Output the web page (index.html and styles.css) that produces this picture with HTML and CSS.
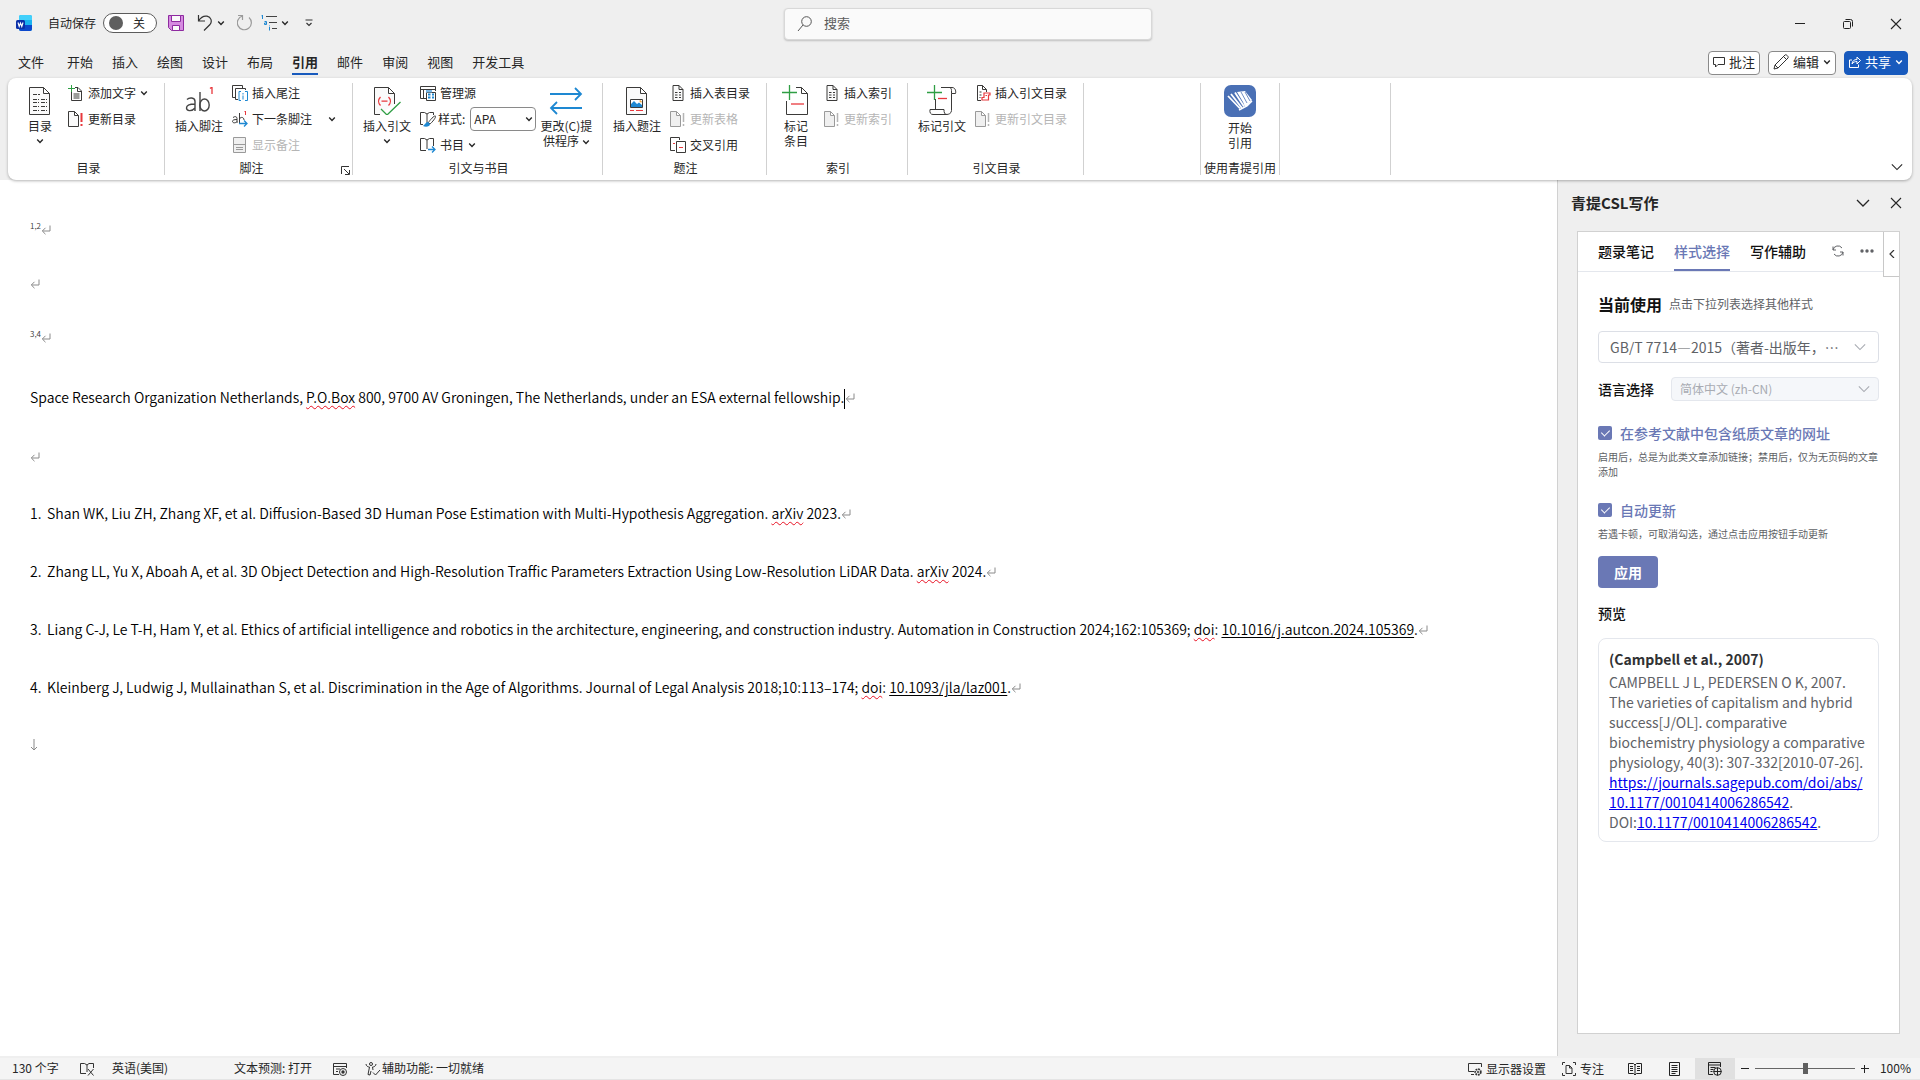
FILE: index.html
```html
<!DOCTYPE html>
<html lang="zh-CN">
<head>
  <meta charset="UTF-8" />
  <meta name="viewport" content="width=device-width, initial-scale=1.0"/>
  <title>Word</title>
  <link rel="stylesheet" href="styles.css">
</head>
<body>

  <!-- shared icons -->
  <svg class="defs" aria-hidden="true">
    <symbol id="chev" viewBox="0 0 8 8"><path d="M1.2 2.6 4 5.4 6.8 2.6" fill="none" stroke="currentColor" stroke-width="1.4"/></symbol>
    <symbol id="chev-wide" viewBox="0 0 14 14"><path d="M1 4l6 6 6-6" fill="none" stroke="currentColor" stroke-width="1.3"/></symbol>
    <symbol id="close" viewBox="0 0 12 12"><path d="M1 1l10 10M11 1 1 11" fill="none" stroke="currentColor" stroke-width="1.1"/></symbol>
    <symbol id="page-small" viewBox="0 0 16 16"><path d="M3 .5h6l4 4v11H3zM9 .5v4h4" fill="#fafafa" stroke="#3b3a39"/><path d="M5 7.5h2.500M9 7.500h2M5 10h2.500M9 10h2M5 12.500h2.500M9 12.500h2" stroke="#3b3a39"/></symbol>
    <symbol id="page-update" viewBox="0 0 16 16"><path d="M.5.500h6l4 4v11H.500zM6.500.500v4h4" fill="#fafafa" stroke="#3b3a39"/><path d="M13.500 2v9M13.500 13v2" stroke="#e8383d" stroke-width="2"/></symbol>
    <symbol id="page-update-off" viewBox="0 0 16 16"><path d="M.5.500h6l4 4v11H.500zM6.500.500v4h4" fill="#f0f0f0" stroke="#9a9a9a"/><path d="M13.500 2v9M13.500 13v2" stroke="#b5b5b5" stroke-width="1.500"/></symbol>
    <symbol id="para" viewBox="0 0 10 10"><path d="M9 .5V6H1.500M4.500 2.800 1.300 6l3.200 3.200" fill="none" stroke="#8a8a8a"/></symbol>
  </svg>

  <header class="titlebar">
    <div class="quick">
      <svg class="word" width="16" height="16" viewBox="0 0 16 16"><rect x="3" width="13" height="16" rx="2" fill="#1ab2f0"/><path d="M5 0h9a2 2 0 0 1 2 2v3H3V2a2 2 0 0 1 2-2z" fill="#42d0fb"/><path d="M3 10h13v4a2 2 0 0 1-2 2H5a2 2 0 0 1-2-2z" fill="#0b47cc"/><rect y="5" width="9" height="9" rx="1.500" fill="#0a2fa8"/><path d="M2 7.500l1.200 4L4.500 8l1.300 3.500 1.200-4" fill="none" stroke="#fff" stroke-width="1.100"/></svg>
      <span id="autosave">自动保存</span>
      <button class="toggle" aria-labelledby="autosave"><i></i>关</button>
      <button class="ico save" title="保存"><svg width="16" height="16" viewBox="0 0 16 16"><path d="M.5.500h15v15h-12l-3-3z" fill="#d58be0" stroke="#8e2aa0"/><path d="M3.500.500h9v6h-9z" fill="#fafafa" stroke="#8e2aa0"/><path d="M4.500 10.500h7v5h-7z" fill="#fafafa" stroke="#8e2aa0"/></svg></button>
      <button class="ico undo" title="撤消"><svg width="16" height="16" viewBox="0 0 16 16"><path d="M1.500 0v6H8M1.500 6C4 2 7 .7 10 1.200c4 .8 5.500 5 3 8.300L7 15.500" fill="none" stroke="#333" stroke-width="1.200"/></svg></button>
      <button class="ico drop" title="撤消列表"><svg width="8" height="8"><use href="#chev"/></svg></button>
      <button class="ico redo" title="重复"><svg width="16" height="16" viewBox="0 0 16 16"><path d="M1 .500h4.500V5M5.500 1A7 7 0 1 0 12 2.500" fill="none" stroke="#9a9a9a" stroke-width="1.200"/></svg></button>
      <button class="ico list" title="多级列表"><svg width="16" height="16" viewBox="0 0 16 16"><path d="M5 1.500h11M8 7.500h8M11 13.500h5" stroke="#444"/><path d="M.5.800 1.500 0v4M3.500 6.500h2v3h-2v-1.500h2M8.500 12v3.500M8.500 10.500v.8" fill="none" stroke="#1e88d2"/></svg></button>
      <button class="ico drop" title="列表选项"><svg width="8" height="8"><use href="#chev"/></svg></button>
      <button class="ico more" title="自定义快速访问工具栏"><svg width="8" height="8" viewBox="0 0 8 8"><path d="M.5 1h7M1.500 4 4 6.500 6.500 4" fill="none" stroke="#333" stroke-width="1.200"/></svg></button>
    </div>
    <label class="search">
      <svg width="16" height="16" viewBox="0 0 16 16"><circle cx="9.500" cy="5.500" r="4.800" fill="none" stroke="#555"/><path d="M6 9 1 15" stroke="#555"/></svg>
      <input type="text" placeholder="搜索">
    </label>
    <div class="window">
      <button title="最小化"><svg width="12" height="12" viewBox="0 0 12 12"><path d="M1 5.500h10" stroke="#222"/></svg></button>
      <button title="还原"><svg width="12" height="12" viewBox="0 0 12 12"><rect x="1.500" y="3.500" width="7" height="7" rx="1" fill="none" stroke="#222"/><path d="M3.500 1.500h5a2 2 0 0 1 2 2v5" fill="none" stroke="#222"/></svg></button>
      <button title="关闭"><svg width="12" height="12"><use href="#close"/></svg></button>
    </div>
  </header>

  <nav class="tabs">
    <button class="file">文件</button>
    <button>开始</button>
    <button>插入</button>
    <button>绘图</button>
    <button>设计</button>
    <button>布局</button>
    <button class="active">引用</button>
    <button>邮件</button>
    <button>审阅</button>
    <button>视图</button>
    <button>开发工具</button>
    <div class="actions">
      <button><svg width="12" height="12" viewBox="0 0 12 12"><path d="M.5 1.500h11v7H5L2.500 11V8.500h-2z" fill="none" stroke="#333"/></svg>批注</button>
      <button><svg width="16" height="16" viewBox="0 0 16 16"><path d="M1 15l1-4L12 1c1-1 4 1.500 3 3L5 14zM10.500 2.500l3 3M2 11l3 3" fill="none" stroke="#333"/></svg>编辑<svg class="arrow" width="8" height="8"><use href="#chev"/></svg></button>
      <button class="share"><svg width="12" height="12" viewBox="0 0 12 12"><path d="M3 4H.500v7.500h9V8.500M3 8c.3-3 2-4.500 5-4.500V1L11.500 4.500 8 8V5.500C6 5.500 4.500 6 3 8z" fill="none" stroke="#fff"/></svg>共享<svg class="arrow" width="8" height="8"><use href="#chev"/></svg></button>
    </div>
  </nav>

  <section class="ribbon">
    <div class="group g-toc">
      <div class="tools">
        <button class="big short">
          <svg width="24" height="28" viewBox="0 0 24 28"><path d="M1.500.500h14l6 6v21h-20zM15.500.500v6h6" fill="#fafafa" stroke="#3b3a39"/><path d="M5 7.500h7M5 12.500h6M13 12.500h6M5 15.500h6M13 15.500h6M5 19.500h6M13 19.500h6M5 23.500h6M13 23.500h6" stroke="#3b3a39" stroke-dasharray="4 1"/></svg>
          目录<svg class="arrow" width="8" height="8"><use href="#chev"/></svg>
        </button>
        <div class="col">
          <button><svg width="16" height="16" viewBox="0 0 16 16"><path d="M7 2.500h3l3.500 3.500v9.500h-10V7M9.500 2.500v4h4" fill="none" stroke="#3b3a39"/><path d="M5.500 9h6M5.500 11h6M5.500 13h6" stroke="#3b3a39"/><path d="M3.500 0v7M0 3.500h7" stroke="#2f9e44"/></svg>添加文字<svg class="arrow" width="8" height="8"><use href="#chev"/></svg></button>
          <button><svg width="16" height="16"><use href="#page-update"/></svg>更新目录</button>
        </div>
      </div>
      <h2>目录</h2>
    </div>

    <div class="group g-note">
      <div class="tools">
        <button class="big">
          <svg width="32" height="28" viewBox="0 0 32 28"><g fill="none" stroke="#444" stroke-width="1.400"><path d="M4 12.500c2-2 8-2.500 8 2V24M12 17c-5 0-8.500 1-8.500 4s5 4 8.500 0M17 5v19"/><ellipse cx="21.500" cy="18" rx="4.700" ry="6"/></g><path d="M27 1.500 29 0v7" fill="none" stroke="#e8383d" stroke-width="1.300"/></svg>
          插入脚注
        </button>
        <div class="col">
          <button><svg width="16" height="16" viewBox="0 0 16 16"><path d="M4 12.500H.500V.500h10V3M6 14.500H3.500V3.500h10V5" fill="none" stroke="#3b3a39"/><path d="M9 6.500H7v9h2M13 6.500h2.500v9H13M11 8v1.500M11 10.500v4" fill="none" stroke="#1e88d2"/></svg>插入尾注</button>
          <div class="pair">
            <button><svg width="16" height="16" viewBox="0 0 16 16"><path d="M1 6.500c2-1.500 4-1 4 1V12M5 8.500c-3 0-4.500.5-4.500 2s3 2 4.500 0M7.500 2v10M7.500 8c1-2.500 4.500-2 4.500 1" fill="none" stroke="#3b3a39"/><path d="M12.500 1 13.500 0v4" fill="none" stroke="#e8383d"/><path d="M7 12.500h8M12 9.500l3 3-3 3" fill="none" stroke="#1e88d2" stroke-width="1.300"/></svg>下一条脚注</button>
            <button class="split" title="更多脚注"><svg width="8" height="8"><use href="#chev"/></svg></button>
          </div>
          <button disabled><svg width="16" height="16" viewBox="0 0 16 16"><path d="M1.500.500h12v15h-12zM1.500 7.500h12" fill="#f0f0f0" stroke="#9a9a9a"/><path d="M4 10.500h7M4 12.500h7" stroke="#9a9a9a"/></svg>显示备注</button>
        </div>
      </div>
      <h2>脚注</h2>
      <button class="launcher" title="脚注和尾注"><svg width="9" height="9" viewBox="0 0 9 9"><path d="M.5 8V.500H8M3 3l5 5M8.500 4v4.500H4" fill="none" stroke="#333"/></svg></button>
    </div>

    <div class="group g-cite">
      <div class="tools">
        <button class="big">
          <svg width="28" height="28" viewBox="0 0 28 28"><path d="M7 27.500H1.500V.500h14l6 6V17M15.500.500v6h6" fill="#fafafa" stroke="#3b3a39"/><path d="M7.500 10c-2.500 2.500-2.500 6 0 8.500M15.500 10c2.500 2.500 2.500 6 0 8.500M8.500 14.200h6" fill="none" stroke="#e8383d" stroke-width="1.300"/><path d="M8 22l6 6L27.500 15" fill="none" stroke="#2f9e44" stroke-width="1.300"/></svg>
          插入引文<svg class="arrow" width="8" height="8"><use href="#chev"/></svg>
        </button>
        <div class="col">
          <button><svg width="16" height="16" viewBox="0 0 16 16"><path d="M6 13.500H.500V1.500h15V6M.500 4.500h15M3.500 4.500v9" fill="none" stroke="#3b3a39"/><path d="M6.500 7.500h9v8h-9z" fill="#fff" stroke="#3b3a39"/><path d="M6 5h6v2.500H6z" fill="#7ab8e6"/><path d="M8 9.500h2.500M12 9.500h2M8 12.500h2.500M12 12.500h2" stroke="#1e88d2" stroke-width="2"/></svg>管理源</button>
          <div class="pair">
            <label class="style-label" for="cite-style"><svg width="16" height="16" viewBox="0 0 16 16"><path d="M3 13.500H.500V1.500h4L7 3l2.500-1.500h4V4M7 3v9" fill="none" stroke="#3b3a39"/><path d="M15.500 5c-1-1-6 4.500-7 6.500l1.500 1.500c2-1.500 6.500-7 5.500-8z" fill="#fff" stroke="#3b3a39"/><path d="M8 11c-2 0-2.500 2-5 4 3 1.500 7 .5 7-2z" fill="#1e88d2"/></svg>样式:</label>
            <span class="combo"><select id="cite-style"><option>APA</option></select><svg width="8" height="8"><use href="#chev"/></svg></span>
          </div>
          <button><svg width="16" height="16" viewBox="0 0 16 16"><path d="M6 13.500H.500V1.500h4L7 3l2.500-1.500h4V9M7 3v9" fill="none" stroke="#3b3a39"/><path d="M8 12.500h7M12 9.500l3 3-3 3" fill="none" stroke="#1e88d2" stroke-width="1.300"/></svg>书目<svg class="arrow" width="8" height="8"><use href="#chev"/></svg></button>
        </div>
        <button class="big change">
          <svg width="34" height="28" viewBox="0 0 34 28"><path d="M1 7h31M26 1l6 6-6 6M33 21H2M8 15l-6 6 6 6" fill="none" stroke="#1e88d2" stroke-width="1.800"/></svg>
          <span>更改(C)提<br>供程序 <svg width="8" height="8"><use href="#chev"/></svg></span>
        </button>
      </div>
      <h2>引文与书目</h2>
    </div>

    <div class="group g-caption">
      <div class="tools">
        <button class="big">
          <svg width="24" height="28" viewBox="0 0 24 28"><path d="M1.500.500h14l6 6v21h-20zM15.500.500v6h6" fill="#fafafa" stroke="#3b3a39"/><path d="M5.500 12.500h12v8h-12z" fill="#fff" stroke="#3b3a39"/><path d="M6 20v-3l3-3 3 3 2-1.500 3 2.500v2z" fill="#1e88d2"/><path d="M14.500 14h1.500v1.500" stroke="#f08c00" fill="none"/><path d="M5 23.500h4M11 23.500h7" stroke="#e8383d"/></svg>
          插入题注
        </button>
        <div class="col">
          <button><svg width="16" height="16"><use href="#page-small"/></svg>插入表目录</button>
          <button disabled><svg width="16" height="16"><use href="#page-update-off"/></svg>更新表格</button>
          <button><svg width="16" height="16" viewBox="0 0 16 16"><path d="M5 13.500H.500V.500h9V3" fill="none" stroke="#3b3a39"/><path d="M6.500 4.500h9v11h-9z" fill="#fff" stroke="#3b3a39"/><path d="M3 6.500h2M9 10.500h4" stroke="#e8383d"/></svg>交叉引用</button>
        </div>
      </div>
      <h2>题注</h2>
    </div>

    <div class="group g-index">
      <div class="tools">
        <button class="big short">
          <svg width="28" height="30" viewBox="0 0 28 30"><path d="M4.500 16v13.500h21V8.500l-6-6H14M19.500 2.500v6h6" fill="none" stroke="#3b3a39"/><path d="M9 19h13" stroke="#e8383d" stroke-width="1.300"/><path d="M7.500 0v15M0 7.500h15" stroke="#2f9e44" stroke-width="1.300"/></svg>
          <span>标记<br>条目</span>
        </button>
        <div class="col">
          <button><svg width="16" height="16"><use href="#page-small"/></svg>插入索引</button>
          <button disabled><svg width="16" height="16"><use href="#page-update-off"/></svg>更新索引</button>
        </div>
      </div>
      <h2>索引</h2>
    </div>

    <div class="group g-auth">
      <div class="tools">
        <button class="big">
          <svg width="30" height="30" viewBox="0 0 30 30"><path d="M8.500 14v10M14 2.500h11c4 0 4 5 3.500 6H24.500v17c0 3-3 4-5 4H6c-2.500 0-3.500-2-3-5h14c0 3 .5 5 3 5M24.500 8.500v-3c0-2-1-3-2-3" fill="none" stroke="#3b3a39"/><path d="M11 13.500h9" stroke="#e8383d" stroke-width="1.300"/><path d="M7.500 0v15M0 7.500h15" stroke="#2f9e44" stroke-width="1.300"/></svg>
          标记引文
        </button>
        <div class="col">
          <button><svg width="16" height="16" viewBox="0 0 16 16"><path d="M6 15.500H2.500V.500h5l4 4V7M7.500.500v4h4" fill="none" stroke="#3b3a39"/><path d="M4.500 7h2M4.500 10h2M4.500 12.500h1" stroke="#3b3a39"/><path d="M9 8h6v2h-1.500v5H7v-2.500h2zM10.500 10.500h1.500" fill="#fff" stroke="#e8383d" stroke-width="1.200"/></svg>插入引文目录</button>
          <button disabled><svg width="16" height="16"><use href="#page-update-off"/></svg>更新引文目录</button>
        </div>
      </div>
      <h2>引文目录</h2>
    </div>

    <div class="group g-empty"></div>

    <div class="group g-qingti">
      <div class="tools">
        <button class="big">
          <svg width="32" height="32" viewBox="0 0 32 32"><rect width="32" height="32" rx="7" fill="#4a70b5"/><g fill="none" stroke="#fff" stroke-width="1.800"><path d="M4 11l12 12.500M7 9l11 14M11 7.500l9 14"/></g><path d="M13 7l8-1 7 9-5 6-2 1-2-5z" fill="#fff"/><path d="M17 7l6 11M21 7l5 9" stroke="#4a70b5" stroke-width=".8"/><path d="M15 25l8-4 5-5" fill="none" stroke="#fff" stroke-width="1.500"/></svg>
          <span>开始<br>引用</span>
        </button>
      </div>
      <h2>使用青提引用</h2>
    </div>

    <div class="group g-last"></div>
    <button class="collapse" title="折叠功能区"><svg width="12" height="12"><use href="#chev-wide"/></svg></button>
  </section>

  <main>
    <article class="doc">
      <p class="mark"><sup>1,2</sup><svg width="10" height="10"><use href="#para"/></svg></p>
      <p class="mark"><svg width="10" height="10"><use href="#para"/></svg></p>
      <p class="mark last"><sup>3,4</sup><svg width="10" height="10"><use href="#para"/></svg></p>
      <p>Space Research Organization Netherlands, <u class="typo">P.O.Box</u> 800, 9700 AV Groningen, The Netherlands, under an ESA external fellowship.<i class="caret"></i><svg width="10" height="10"><use href="#para"/></svg></p>
      <p><svg width="10" height="10"><use href="#para"/></svg></p>
      <ol>
        <li>Shan WK, Liu ZH, Zhang XF, et al. Diffusion-Based 3D Human Pose Estimation with Multi-Hypothesis Aggregation. <u class="typo">arXiv</u> 2023.<svg width="10" height="10"><use href="#para"/></svg></li>
        <li>Zhang LL, Yu X, Aboah A, et al. 3D Object Detection and High-Resolution Traffic Parameters Extraction Using Low-Resolution LiDAR Data. <u class="typo">arXiv</u> 2024.<svg width="10" height="10"><use href="#para"/></svg></li>
        <li>Liang C-J, Le T-H, Ham Y, et al. Ethics of artificial intelligence and robotics in the architecture, engineering, and construction industry. Automation in Construction 2024;162:105369; <u class="typo">doi</u>: <a href="#">10.1016/j.autcon.2024.105369</a>.<svg width="10" height="10"><use href="#para"/></svg></li>
        <li>Kleinberg J, Ludwig J, Mullainathan S, et al. Discrimination in the Age of Algorithms. Journal of Legal Analysis 2018;10:113–174; <u class="typo">doi</u>: <a href="#">10.1093/jla/laz001</a>.<svg width="10" height="10"><use href="#para"/></svg></li>
      </ol>
      <p><svg width="8" height="12" viewBox="0 0 8 12"><path d="M4 0v11M1 8l3 3 3-3" fill="none" stroke="#8a8a8a"/></svg></p>
    </article>

    <aside class="pane">
      <header>
        <h1>青提CSL写作</h1>
        <button title="任务窗格选项"><svg width="14" height="14"><use href="#chev-wide"/></svg></button>
        <button title="关闭窗格"><svg width="12" height="12"><use href="#close"/></svg></button>
      </header>
      <div class="addin">
        <nav class="addin-tabs">
          <button>题录笔记</button>
          <button class="active">样式选择</button>
          <button>写作辅助</button>
          <div class="tab-tools">
            <button title="刷新"><svg width="12" height="12" viewBox="0 0 12 12"><path d="M1 5a5 5 0 0 1 9-2M11 7a5 5 0 0 1-9 2M1 1.500V5h3M11 10.500V7H8" fill="none" stroke="#606266"/></svg></button>
            <button title="更多"><svg width="14" height="4" viewBox="0 0 14 4"><g fill="#606266"><circle cx="2" cy="2" r="1.700"/><circle cx="7" cy="2" r="1.700"/><circle cx="12" cy="2" r="1.700"/></g></svg></button>
          </div>
        </nav>
        <button class="fold" title="收起"><svg width="6" height="8" viewBox="0 0 6 8"><path d="M5 0 1 4l4 4" fill="none" stroke="#333" stroke-width="1.200"/></svg></button>

        <form>
          <div class="current"><label for="style">当前使用</label><small>点击下拉列表选择其他样式</small></div>
          <div class="picker">
            <select id="style"><option>GB/T 7714—2015（著者-出版年，…</option></select>
            <svg width="12" height="12"><use href="#chev-wide"/></svg>
          </div>
          <div class="lang">
            <label for="lang">语言选择</label>
            <div class="picker small">
              <select id="lang" disabled><option>简体中文 (zh-CN)</option></select>
              <svg width="12" height="12"><use href="#chev-wide"/></svg>
            </div>
          </div>
          <label class="check"><input type="checkbox" checked>在参考文献中包含纸质文章的网址</label>
          <p class="hint">启用后，总是为此类文章添加链接；禁用后，仅为无页码的文章添加</p>
          <label class="check"><input type="checkbox" checked>自动更新</label>
          <p class="hint">若遇卡顿，可取消勾选，通过点击应用按钮手动更新</p>
          <button type="button" class="apply">应用</button>
          <h3>预览</h3>
          <div class="preview">
            <strong>(Campbell et al., 2007)</strong>
            <p>CAMPBELL J L, PEDERSEN O K, 2007. The varieties of capitalism and hybrid success[J/OL]. comparative biochemistry physiology a comparative physiology, 40(3): 307-332[2010-07-26]. <a href="#">https://journals.sagepub.com/doi/abs/<wbr>10.1177/0010414006286542</a>. DOI:<a href="#">10.1177/0010414006286542</a>.</p>
          </div>
        </form>
      </div>
    </aside>
  </main>

  <footer class="status">
    <span class="words">130 个字</span>
    <svg class="proof" width="14" height="14" viewBox="0 0 14 14"><path d="M6 11.500H.500V1.500h4L7 3l2-1.500h4.500V6M7 3v7M8 7l5.500 6.500M13.500 7 8 13.500" fill="none" stroke="#333"/></svg>
    <span class="langname">英语(美国)</span>
    <span class="predict">文本预测: 打开</span>
    <svg class="macro" width="14" height="14" viewBox="0 0 14 14"><path d="M6 12.500H.500V1.500h13V6M.500 4.500h13M3 7h4M3 9.500h2" fill="none" stroke="#333"/><circle cx="10" cy="10" r="3.500" fill="none" stroke="#333"/><circle cx="10" cy="10" r="1.700" fill="#333"/></svg>
    <svg class="access" width="16" height="14" viewBox="0 0 16 14"><circle cx="6" cy="2" r="1.500" fill="none" stroke="#333"/><path d="M1 2c0 2 2 3 3.500 3L3 12.500l2 .5 1-4M11 2c0 2-2 3-3.500 3L8 8M8 10.500l2.500 2.500L15 8" fill="none" stroke="#333"/></svg>
    <span>辅助功能: 一切就绪</span>

    <div class="views">
      <button class="display"><svg width="14" height="14" viewBox="0 0 14 14"><path d="M6 9.500H.500v-8h13V5M3 12.500h3" fill="none" stroke="#333"/><circle cx="10" cy="10" r="2.800" fill="none" stroke="#333" stroke-width="1.800" stroke-dasharray="1.800 .8"/><circle cx="10" cy="10" r="1" fill="#333"/></svg>显示器设置</button>
      <button class="focus"><svg width="14" height="14" viewBox="0 0 14 14"><path d="M3 .500H.500V3M11 .500h2.500V3M3 13.500H.500V11M11 13.500h2.500V11M4 3.500h3.500L10 6v5.500H4zM7.500 3.500V6H10" fill="none" stroke="#333"/></svg>专注</button>
      <button class="view" title="阅读视图"><svg width="14" height="14" viewBox="0 0 14 14"><path d="M.5 1.500h5L7 3l1.500-1.500h5v10h-5L7 13l-1.500-1.500h-5zM7 3v10M2 4.500h3M2 6.500h3M2 8.500h3M9 4.500h3M9 6.500h3M9 8.500h3" fill="none" stroke="#222"/></svg></button>
      <button class="view" title="页面视图"><svg width="14" height="14" viewBox="0 0 14 14"><path d="M1.500.500h10v13h-10zM3.500 3.500h6M3.500 5.500h6M3.500 7.500h6M3.500 9.500h6M3.500 11.500h4" fill="none" stroke="#222"/></svg></button>
      <button class="view on" title="Web 版式视图"><svg width="14" height="14" viewBox="0 0 14 14"><path d="M5 12.500H.500V.500h12V5M.500 3h12M2.500 5.500h5M2.500 7.500h3M2.500 9.500h2" fill="none" stroke="#222"/><circle cx="9.500" cy="9.500" r="3.800" fill="none" stroke="#222"/><path d="M5.500 9.500h8M9.500 5.500v8" stroke="#222"/></svg></button>
      <button class="zoom" title="缩小"><svg width="8" height="8" viewBox="0 0 8 8"><path d="M0 3.500h8" stroke="#222"/></svg></button>
      <input type="range" min="0" max="100" value="50" aria-label="缩放">
      <button class="zoom" title="放大"><svg width="8" height="8" viewBox="0 0 8 8"><path d="M0 3.500h8M3.500 0v8" stroke="#222"/></svg></button>
      <span class="percent">100%</span>
    </div>
  </footer>

</body>
</html>
```
FILE: styles.css
```css
* {
  box-sizing: border-box;
}

body {
  display: grid;
  grid-template-rows: 48px 30px auto 1fr 22px;
  height: 100vh;
  margin: 0;
  font-family: "Noto Sans CJK SC", sans-serif;
  font-size: 12px;
  line-height: 16px;
  color: #262626;
  background: #efefef;
}

button {
  display: flex;
  align-items: center;
  justify-content: center;
  padding: 0;
  border: none;
  background: none;
  font: inherit;
  color: inherit;
  white-space: nowrap;
}

button:disabled {
  color: #b5b5b5;
}

svg {
  flex: none;
}

.defs {
  position: absolute;
  width: 0;
  height: 0;
}

/* title bar */
.titlebar {
  display: grid;
  grid-template-columns: 1fr 368px 1fr;
  padding-left: 16px;
  align-items: center;
}

.quick {
  display: flex;
  align-items: center;
  margin-bottom: 2px;
}

.word {
  margin-right: 16px;
}

.toggle {
  width: 54px;
  height: 20px;
  margin: 0 11px 0 7px;
  padding: 0 11px 0 5px;
  justify-content: space-between;
  border: 1px solid #5c5c5c;
  border-radius: 10px;
  background: #fff;
}

.toggle i {
  width: 14px;
  height: 14px;
  border-radius: 50%;
  background: #5f5f5f;
}

.ico {
  width: 16px;
  height: 24px;
}

.undo {
  margin-left: 13px;
}

.drop {
  margin-right: 8px;
}

.redo {
  margin-right: 8px;
}

.search {
  display: flex;
  align-items: center;
  gap: 11px;
  height: 32px;
  padding: 0 12px;
  border: 1px solid #d8d8d8;
  border-radius: 4px;
  background: #fafafa;
  box-shadow: 0 1px 2px rgba(0, 0, 0, 0.2);
}

.search input {
  flex: 1;
  padding: 0 0 2px;
  border: none;
  outline: none;
  background: none;
  font: inherit;
  font-size: 13px;
}

.search input::placeholder {
  color: #5c5c5c;
}

.window {
  display: flex;
  justify-content: flex-end;
}

.window button {
  width: 48px;
  height: 32px;
}

/* tabs */
.tabs {
  display: flex;
  gap: 19px;
  padding: 0 12px 0 18px;
  font-size: 13px;
}

.tabs > button {
  height: 27px;
  padding-top: 2px;
  border-bottom: 2px solid transparent;
}

.tabs .file {
  margin-right: 4px;
}

.tabs > .active {
  font-weight: bold;
  border-color: #185abd;
}

.actions {
  display: flex;
  gap: 8px;
  margin-left: auto;
  padding-top: 3px;
}

.actions button {
  height: 24px;
  padding: 0 4px 2px;
  gap: 4px;
  border: 1px solid #8a8a8a;
  border-radius: 4px;
  background: #fff;
}

.actions .share {
  border-color: #185abd;
  background: #185abd;
  color: #fff;
}

/* ribbon */
.ribbon {
  position: relative;
  z-index: 1;
  display: flex;
  height: 102px;
  margin: 0 8px;
  padding: 5px 0;
  border-radius: 8px;
  background: #fff;
  box-shadow: 0 1px 3px rgba(0, 0, 0, 0.3);
}

.group {
  position: relative;
  display: flex;
  flex-direction: column;
  justify-content: space-between;
  padding-left: 2px;
  border-right: 1px solid #d1d1d1;
}

.g-toc { width: 157px; padding-left: 5px; }
.g-note { width: 188px; }
.g-cite { width: 250px; }
.g-caption { width: 164px; }
.g-index { width: 141px; }
.g-auth { width: 176px; }
.g-empty { width: 117px; }
.g-qingti { width: 79px; padding: 0; }
.g-last { width: 111px; }

.tools {
  display: flex;
}

.big {
  flex-direction: column;
  justify-content: flex-start;
  width: 64px;
  height: 78px;
  padding-top: 4px;
  line-height: 15px;
}

.big > svg:first-child {
  margin-bottom: 3px;
}

.big > svg[height="30"] {
  margin-top: -2px;
}

.big > .arrow {
  margin-top: 4px;
}

.big.short {
  width: 54px;
}

.big.change {
  width: 60px;
}

.g-qingti .tools {
  justify-content: center;
}

.g-qingti .big {
  padding-top: 2px;
}

.col {
  display: flex;
  flex-direction: column;
  align-items: flex-start;
  margin: -3px 0 0 1px;
}

.col button,
.style-label {
  display: flex;
  align-items: center;
  height: 26px;
  gap: 4px;
}

.pair {
  display: flex;
  align-items: center;
}

.pair .split {
  margin-left: 16px;
}

.style-label {
  gap: 2px;
}

.combo {
  position: relative;
  margin-left: 5px;
}

.combo select {
  width: 66px;
  height: 24px;
  padding: 0 3px;
  border: 1px solid #8a8a8a;
  border-radius: 4px;
  background: #fff;
  appearance: none;
  font: inherit;
  color: inherit;
}

.combo svg {
  position: absolute;
  right: 3px;
  top: 8px;
  pointer-events: none;
}

.group h2 {
  margin: 0;
  padding-bottom: 1px;
  font-size: 12px;
  line-height: 14px;
  font-weight: normal;
  text-align: center;
}

.g-note h2 {
  padding-right: 16px;
}

.launcher {
  position: absolute;
  right: 2px;
  bottom: 0;
}

.collapse {
  align-self: flex-end;
  margin: 0 9px 2px auto;
}

/* document */
main {
  display: flex;
  min-height: 0;
  margin-bottom: 2px;
}

.doc {
  flex: 1;
  padding: 39px 30px 0;
  background: #fff;
  font-size: 14px;
  line-height: 20px;
  font-weight: 350;
  color: #000;
}

.doc p {
  margin: 0 0 37px;
}

.doc .mark {
  margin-bottom: 34px;
}

.doc .last {
  margin-bottom: 40px;
}

.doc sup {
  font-size: 8px;
  line-height: 8px;
  color: #333;
}

.doc ol {
  margin: 0;
  padding: 0;
  list-style: none;
  counter-reset: ref;
}

.doc li {
  margin-bottom: 38px;
  counter-increment: ref;
}

.doc li::before {
  content: counter(ref) ".";
  display: inline-block;
  width: 17px;
}

.doc a {
  color: inherit;
}

.doc a,
.doc .typo {
  text-underline-offset: 2px;
}

.typo {
  text-decoration: underline wavy #e81123 1px;
}

.caret {
  display: inline-block;
  width: 1px;
  height: 20px;
  background: #000;
  vertical-align: middle;
}

/* task pane */
.pane {
  display: flex;
  flex-direction: column;
  width: 363px;
  border-left: 1px solid #d1d1d1;
}

.pane > header {
  display: flex;
  align-items: center;
  height: 51px;
  padding: 0 18px 6px 13px;
}

.pane h1 {
  margin: 0 auto 0 0;
  font-size: 15px;
  font-weight: bold;
}

.pane > header button {
  margin-left: 20px;
}

.addin {
  position: relative;
  flex: 1;
  margin: 0 20px 22px 19px;
  border: 1px solid #d1d1d1;
  background: #fff;
}

.addin-tabs {
  display: flex;
  gap: 20px;
  height: 40px;
  padding-left: 20px;
  border-bottom: 1px solid #e4e7ed;
  font-size: 14px;
  font-weight: 500;
  color: #111;
}

.addin-tabs button {
  border-bottom: 2px solid transparent;
}

.addin-tabs .active {
  color: #6a78b5;
  border-color: #6a78b5;
}

.tab-tools {
  display: flex;
  gap: 16px;
  margin-left: 6px;
}

.fold {
  position: absolute;
  top: 0;
  right: 0;
  width: 16px;
  height: 45px;
  border: 1px solid #c8c8c8;
  border-right: none;
  border-top: none;
  background: #fff;
}

form {
  padding: 21px 20px;
}

.current {
  display: flex;
  align-items: center;
  gap: 7px;
  margin-bottom: 16px;
  line-height: 22px;
}

.current label {
  font-size: 16px;
  font-weight: bold;
  color: #111;
}

.current small {
  font-size: 12px;
  color: #606266;
}

.picker {
  position: relative;
  flex: 1;
  color: #a8abb2;
}

.picker select {
  display: block;
  width: 100%;
  height: 32px;
  padding: 0 36px 0 11px;
  border: 1px solid #dcdfe6;
  border-radius: 4px;
  background: #fff;
  appearance: none;
  font: inherit;
  font-size: 14px;
  color: #606266;
}

.picker svg {
  position: absolute;
  right: 13px;
  top: 10px;
  pointer-events: none;
}

.picker.small select {
  height: 24px;
  padding: 0 8px;
  background: #f5f7fa;
  border-color: #e4e7ed;
  font-size: 12px;
  color: #a8abb2;
  opacity: 1;
}

.picker.small svg {
  right: 9px;
  top: 6px;
}

.lang {
  display: flex;
  align-items: center;
  gap: 17px;
  margin: 14px 0 22px;
}

.lang label,
form h3 {
  font-size: 14px;
  font-weight: 500;
  color: #111;
}

.check {
  display: flex;
  align-items: center;
  gap: 8px;
  line-height: 20px;
  font-size: 14px;
  font-weight: 500;
  color: #6a78b5;
}

.check input {
  width: 14px;
  height: 14px;
  margin: 0;
  border-radius: 2px;
  background: #6a78b5;
  appearance: none;
}

/* tick mark */
.check input:checked::after {
  content: "";
  display: block;
  width: 4px;
  height: 7px;
  margin: 2px 0 0 5px;
  border: solid #fff;
  border-width: 0 1px 1px 0;
  transform: rotate(45deg);
}

.hint {
  margin: 6px 0 21px;
  font-size: 10px;
  line-height: 15px;
  color: #606266;
}

.hint + .apply {
  margin-top: -6px;
}

.apply {
  width: 60px;
  height: 32px;
  border-radius: 4px;
  background: #6a78b5;
  color: #fff;
  font-size: 14px;
  font-weight: bold;
}

form h3 {
  margin: 17px 0;
}

.preview {
  padding: 10px 10px 9px;
  border: 1px solid #e4e7ed;
  border-radius: 8px;
  font-size: 14px;
  line-height: 20px;
  color: #606266;
}

.preview strong {
  display: block;
  margin-bottom: 3px;
  color: #303133;
}

.preview p {
  margin: 0;
}

.preview a {
  color: #0000ee;
}

/* status bar */
.status {
  display: flex;
  align-items: center;
  padding: 0 9px 0 12px;
  border-bottom: 1px solid #e4e4e4;
  background: #f4f4f4;
}

.status span {
  padding-bottom: 2px;
}

.words {
  width: 68px;
}

.langname {
  width: 122px;
  margin-left: 18px;
}

.predict {
  width: 99px;
}

.access {
  margin: 0 1px 0 18px;
}

.views {
  display: flex;
  align-items: center;
  align-self: stretch;
  margin-left: auto;
}

.views button {
  gap: 4px;
  align-self: stretch;
}

.focus {
  margin: 0 11px 0 16px;
}

.view {
  width: 40px;
}

.on {
  background: #e0e0e0;
}

.zoom {
  width: 20px;
}

.views input {
  width: 100px;
  height: 12px;
  margin: 0;
  background: linear-gradient(#666, #666) center / 100% 1px no-repeat;
  appearance: none;
}

.views input::-webkit-slider-thumb {
  width: 5px;
  height: 11px;
  background: #5f5f5f;
  appearance: none;
}

.percent {
  width: 36px;
  text-align: right;
}
```
